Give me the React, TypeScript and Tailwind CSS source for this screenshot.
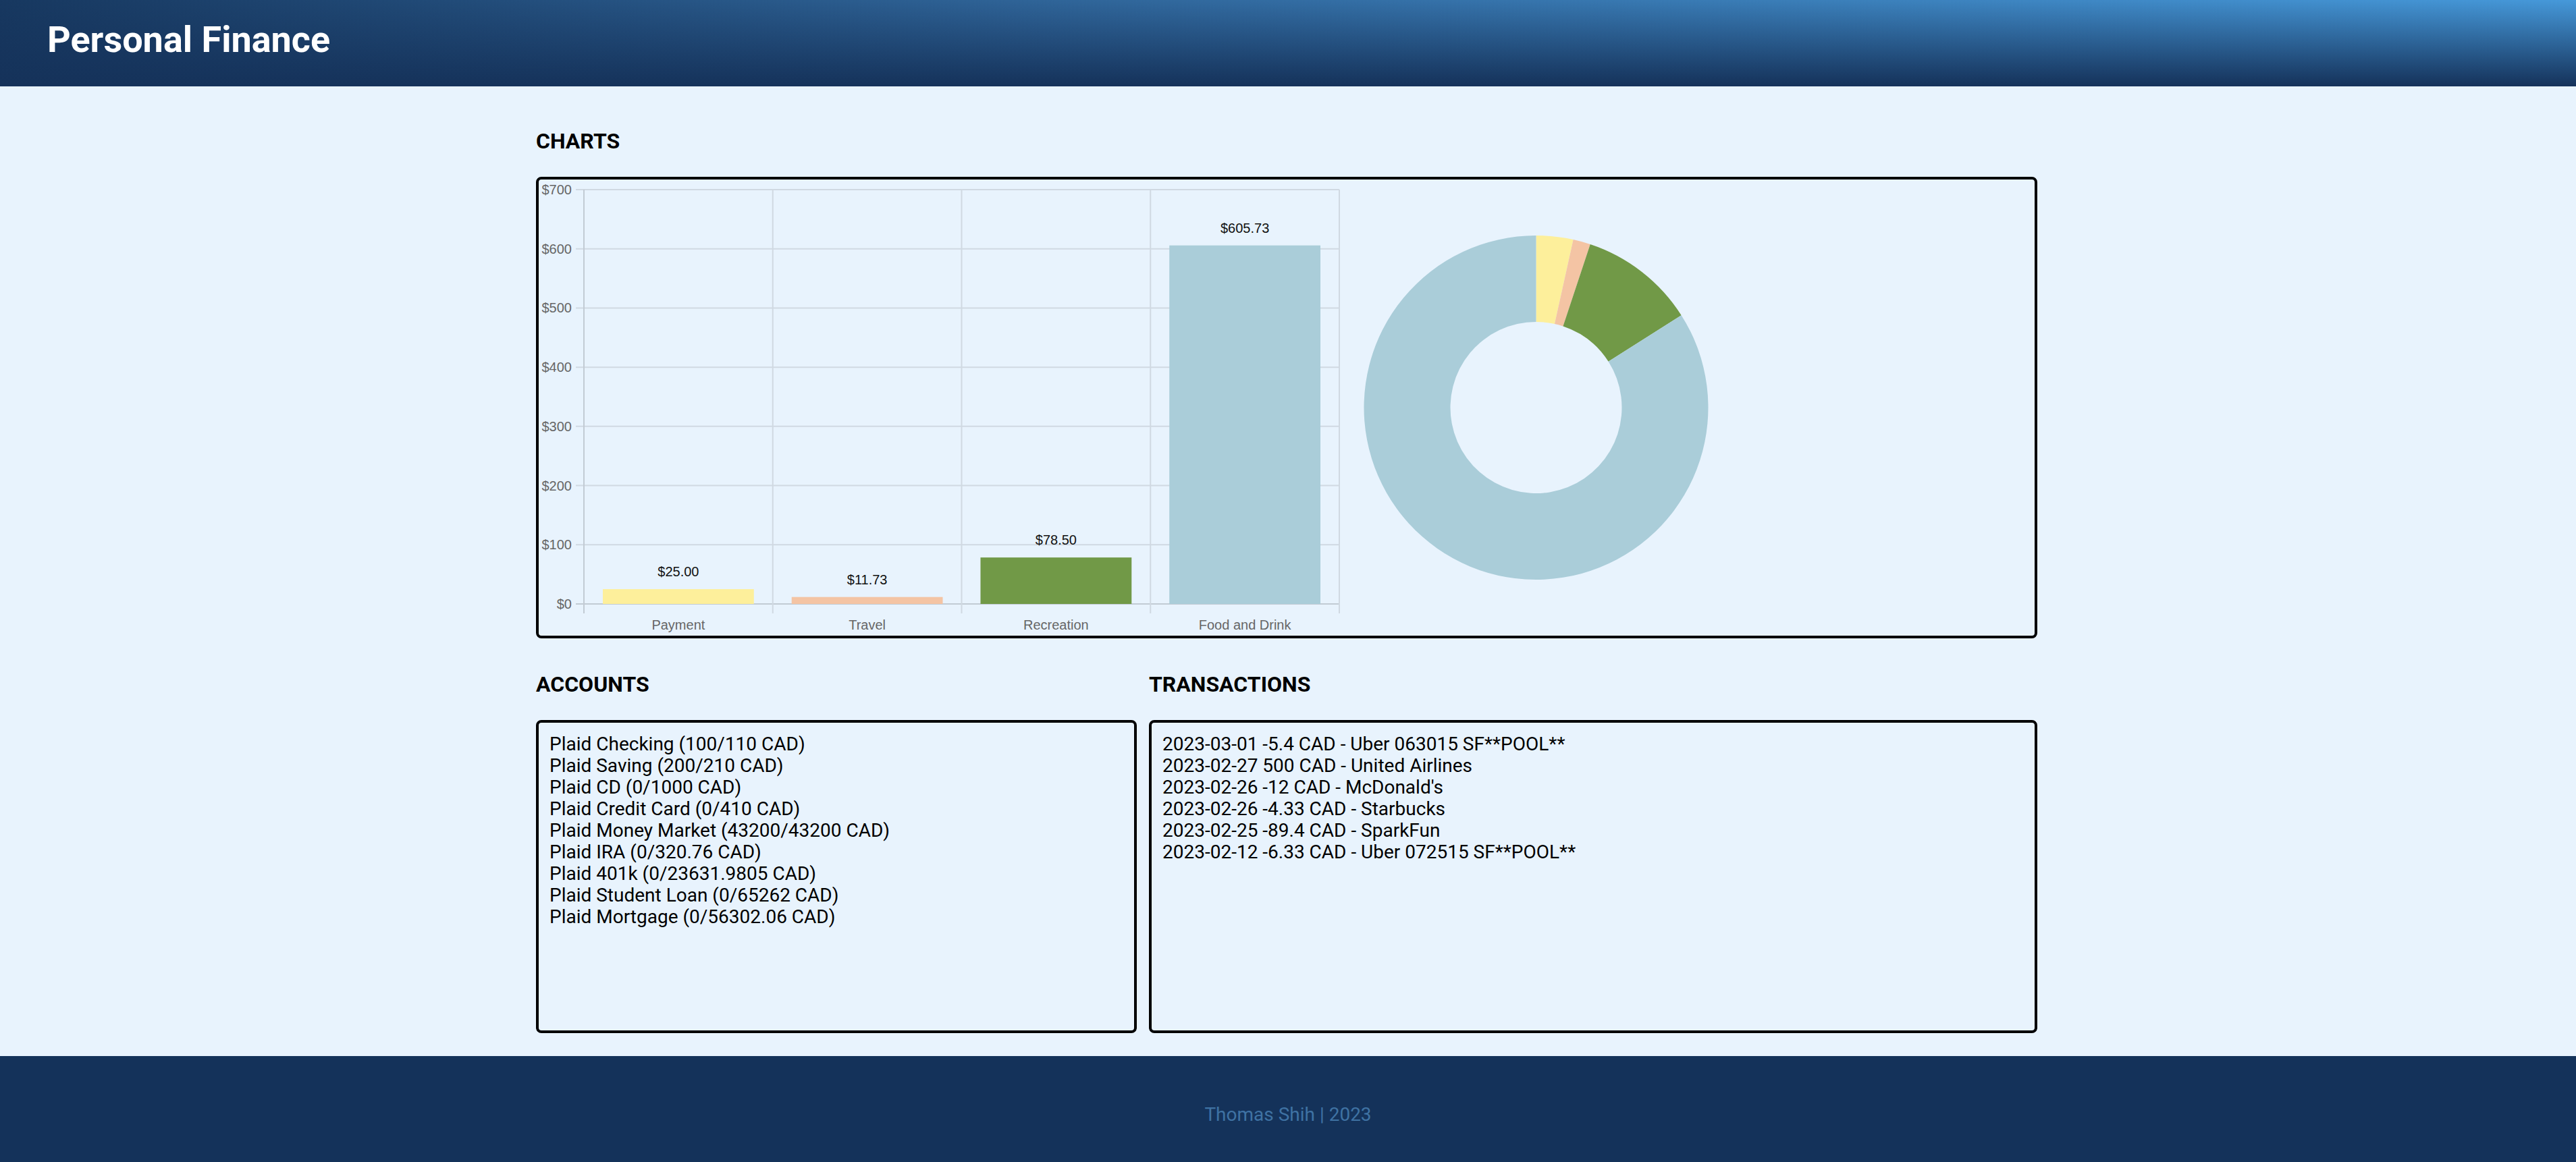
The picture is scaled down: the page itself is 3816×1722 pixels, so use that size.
import React from 'react';

type Category = { name: string; amount: number; color: string };

const CATEGORIES: Category[] = [
    { name: 'Payment', amount: 25, color: '#fdef9b' },
    { name: 'Travel', amount: 11.73, color: '#f4c4a4' },
    { name: 'Recreation', amount: 78.5, color: '#719947' },
    { name: 'Food and Drink', amount: 605.73, color: '#aacdd9' },
];

const ACCOUNTS = [
    'Plaid Checking (100/110 CAD)',
    'Plaid Saving (200/210 CAD)',
    'Plaid CD (0/1000 CAD)',
    'Plaid Credit Card (0/410 CAD)',
    'Plaid Money Market (43200/43200 CAD)',
    'Plaid IRA (0/320.76 CAD)',
    'Plaid 401k (0/23631.9805 CAD)',
    'Plaid Student Loan (0/65262 CAD)',
    'Plaid Mortgage (0/56302.06 CAD)',
];

const TRANSACTIONS = [
    '2023-03-01 -5.4 CAD - Uber 063015 SF**POOL**',
    '2023-02-27 500 CAD - United Airlines',
    "2023-02-26 -12 CAD - McDonald's",
    '2023-02-26 -4.33 CAD - Starbucks',
    '2023-02-25 -89.4 CAD - SparkFun',
    '2023-02-12 -6.33 CAD - Uber 072515 SF**POOL**',
];

// plot area of the bar chart, in svg pixels
const PLOT = { left: 67, right: 1186, top: 15, bottom: 629, max: 700 };
const TICKS = [0, 100, 200, 300, 400, 500, 600, 700];
const GRID = '#d0d9e2';
const AXIS = '#c2cbd4';

const BarChart: React.FC = () => {
    const cell = (PLOT.right - PLOT.left) / CATEGORIES.length;
    const y = (v: number) => PLOT.bottom - (v / PLOT.max) * (PLOT.bottom - PLOT.top);

    return (
        <svg width={1190} height={676} className="shrink-0" fontFamily="'Liberation Sans', Arial, sans-serif">
            {TICKS.map(t => (
                <g key={t}>
                    <line x1={55} x2={PLOT.right} y1={y(t)} y2={y(t)} stroke={t === 0 ? AXIS : GRID} strokeWidth={2} />
                    <text x={49} y={y(t)} textAnchor="end" dominantBaseline="central" fontSize={20} fill="#666">{`$${t}`}</text>
                </g>
            ))}
            {[0, 1, 2, 3, 4].map(i => (
                <line key={i} x1={PLOT.left + i * cell} x2={PLOT.left + i * cell} y1={PLOT.top} y2={643} stroke={i === 0 ? AXIS : GRID} strokeWidth={2} />
            ))}
            {CATEGORIES.map((c, i) => {
                const barW = cell * 0.8;
                const x = PLOT.left + i * cell + (cell - barW) / 2;
                const top = y(c.amount);
                const mid = PLOT.left + i * cell + cell / 2;
                return (
                    <g key={c.name}>
                        <rect x={x} y={top} width={barW} height={PLOT.bottom - top} fill={c.color} />
                        <text x={mid} y={top - 26} textAnchor="middle" dominantBaseline="central" fontSize={20} fill="#111">{`$${c.amount.toFixed(2)}`}</text>
                        <text x={mid} y={660} textAnchor="middle" dominantBaseline="central" fontSize={20} fill="#666">{c.name}</text>
                    </g>
                );
            })}
        </svg>
    );
};

const arcPath = (cx: number, cy: number, R: number, r: number, a0: number, a1: number) => {
    const pt = (rad: number, a: number) => `${cx + rad * Math.cos(a)} ${cy + rad * Math.sin(a)}`;
    const large = a1 - a0 > Math.PI ? 1 : 0;
    return `M${pt(R, a0)} A${R} ${R} 0 ${large} 1 ${pt(R, a1)} L${pt(r, a1)} A${r} ${r} 0 ${large} 0 ${pt(r, a0)} Z`;
};

const Donut: React.FC = () => {
    const total = CATEGORIES.reduce((s, c) => s + c.amount, 0);
    let angle = -Math.PI / 2;
    return (
        <svg width={600} height={676} className="shrink-0">
            {CATEGORIES.map(c => {
                const a0 = angle;
                const a1 = angle + (c.amount / total) * Math.PI * 2;
                angle = a1;
                return <path key={c.name} d={arcPath(287.5, 338, 255, 127, a0, a1)} fill={c.color} />;
            })}
        </svg>
    );
};

const ListBox: React.FC<{ title: string; items: string[] }> = ({ title, items }) => (
    <section>
        <h2 className="text-[32px] leading-[38px] font-bold text-black">{title}</h2>
        <div className="mt-[34px] h-[464px] rounded-lg border-4 border-black p-4">
            {items.map(item => (
                <p key={item} className="text-[28px] leading-[32px] text-black">{item}</p>
            ))}
        </div>
    </section>
);

export default function App() {
    return (
        <div className="min-h-screen bg-[#e8f3fd] font-[Roboto,sans-serif]">
            <header className="h-[128px] pl-[70px] pt-[27px] bg-[linear-gradient(to_bottom,rgba(21,50,90,0),#15325a),linear-gradient(to_right,#173860,#2f6498_40%,#4699da)]">
                <h1 className="text-[54px] leading-[64px] font-bold text-white">Personal Finance</h1>
            </header>

            <main className="ml-[794px] w-[2224px] pt-[62px] pb-[34px]">
                <section>
                    <h2 className="text-[32px] leading-[38px] font-bold text-black">CHARTS</h2>
                    <div className="mt-[34px] h-[684px] rounded-lg border-4 border-black flex">
                        <BarChart />
                        <Donut />
                    </div>
                </section>

                <div className="mt-[49px] grid grid-cols-[890px_1fr] gap-x-[18px]">
                    <ListBox title="ACCOUNTS" items={ACCOUNTS} />
                    <ListBox title="TRANSACTIONS" items={TRANSACTIONS} />
                </div>
            </main>

            <footer className="h-[157px] bg-[#14325a] pt-[70px] text-center">
                <p className="text-[28px] leading-[33px] text-[#3f72a3]">Thomas Shih | 2023</p>
            </footer>
        </div>
    );
}
